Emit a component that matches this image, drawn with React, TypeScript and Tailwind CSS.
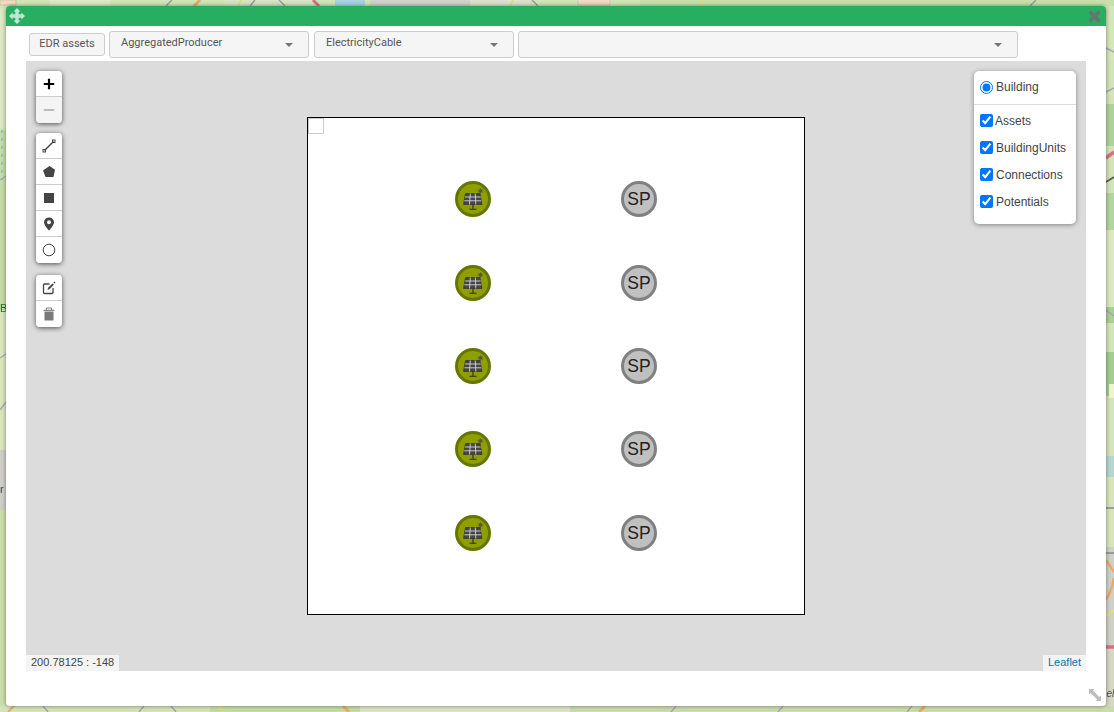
import React from "react";

function MapBackground() {
  const patches = [
    [0, 0, 1114, 712, "#d3e5b8"],
    [0, 8, 6, 120, "#dfe8c4"], [0, 130, 6, 180, "#c5dca6"], [0, 310, 6, 140, "#d9e6bd"], [0, 450, 6, 60, "#cfcfc8"], [0, 510, 6, 200, "#c9dfaa"],
    [1106, 0, 8, 60, "#d5e6b8"], [1106, 104, 8, 42, "#afd29c"], [1106, 193, 8, 37, "#b4d5a2"], [1106, 230, 8, 77, "#dde9c0"], [1106, 307, 8, 16, "#a9cf95"],
    [1106, 352, 8, 44, "#a4cd93"], [1106, 396, 8, 60, "#d4e4bb"], [1106, 456, 8, 21, "#b5d7cf"], [1106, 477, 8, 70, "#d9e4bb"], [1106, 547, 8, 100, "#cfd1c6"], [1106, 647, 8, 65, "#d6d8c4"],
    [50, 0, 60, 6, "#dfe8c4"], [225, 0, 90, 6, "#d9e2c4"], [335, 0, 30, 6, "#a9d3dc"], [370, 0, 100, 6, "#d2d2ca"], [470, 0, 60, 6, "#dfe0cb"], [640, 0, 474, 6, "#c9e0ad"],
    [0, 706, 210, 6, "#d4e2b8"], [210, 706, 150, 6, "#c4dca4"], [360, 706, 210, 6, "#dae4c2"], [570, 706, 544, 6, "#c9dcae"],
  ] as const;
  return (
    <svg className="absolute inset-0 blur-[0.5px]" width="1114" height="712" viewBox="0 0 1114 712">
      {patches.map(([x, y, w, h, c], i) => (
        <rect key={i} x={x} y={y} width={w} height={h} fill={c} />
      ))}
      <rect x="0" y="0" width="16" height="5" fill="#f2dcc0" stroke="#b9a68f" strokeWidth="0.5" />
      <rect x="578" y="-1" width="32" height="6" fill="#f3d9c4" stroke="#c6ad98" strokeWidth="0.5" />
      <g fill="none" strokeWidth="1.4">
        <path d="M166 6 L172 0 M279 0 L285 6 M532 0 L538 6 M250 6 L255 0 M1030 6 L1036 0" stroke="#999" />
        <path d="M238 6 L241 0 M510 6 L513 0 M700 6 L704 0" stroke="#e4d97c" />
        <path d="M313 0 L319 6" stroke="#d9708a" strokeWidth="3" />
        <path d="M194 6 L200 0" stroke="#eba968" strokeWidth="3" />
        <path d="M43 706 L48 712 M139 712 L144 706 M171 706 L176 712 M671 712 L676 706 M778 712 L783 706 M907 712 L912 706" stroke="#a5a5a5" />
        <path d="M343 706 L349 712 M919 712 L925 706" stroke="#eba968" strokeWidth="3" />
        <path d="M8 712 L14 706" stroke="#eba968" strokeWidth="2" />
        <path d="M219 706 L224 712" stroke="#e4d97c" strokeWidth="2" />
        <path d="M1106 158 L1114 152" stroke="#d9708a" strokeWidth="3.5" />
        <path d="M1106 182 L1114 177" stroke="#555" strokeWidth="1.6" />
        <path d="M1106 92 L1114 88 M1106 310 L1114 316 M1106 48 L1114 52" stroke="#a5a5b5" />
        <path d="M1106 508 L1114 508 M1106 553 L1114 553" stroke="#888" />
        <path d="M1106 560 L1114 572 M1106 600 Q1112 590 1114 578" stroke="#eba968" strokeWidth="2.6" />
        <path d="M1106 616 L1114 610" stroke="#e3df76" strokeWidth="2.6" />
        <path d="M1106 647 L1114 647" stroke="#d9708a" strokeWidth="3.5" />
        <path d="M0 358 L6 354 M0 410 L6 402 M0 180 L6 176" stroke="#aaa" />
        <path d="M2 130 L2 180" stroke="#7fb6e0" strokeDasharray="3 5" />
      </g>
      <rect x="1109" y="384" width="5" height="14" fill="#f3f1cf" />
      <text x="0" y="312" fontSize="11" fill="#197a2b" fontFamily="Liberation Sans">B</text>
      <text x="0" y="493" fontSize="11" fill="#444" fontFamily="Liberation Sans">r</text>
      <text x="1106.500" y="697" fontSize="10" fontStyle="italic" fill="#555" fontFamily="Liberation Sans">el</text>
    </svg>
  );
}

function MoveIcon() {
  return (
    <svg width="16" height="16" viewBox="0 0 16 16" fill="#bfe6cf">
      <path d="M8 0 L11.500 3.600 L9.700 3.600 L9.700 6.300 L12.400 6.300 L12.400 4.500 L16 8 L12.400 11.500 L12.400 9.700 L9.700 9.700 L9.700 12.400 L11.500 12.400 L8 16 L4.500 12.400 L6.300 12.400 L6.300 9.700 L3.600 9.700 L3.600 11.500 L0 8 L3.600 4.500 L3.600 6.300 L6.300 6.300 L6.300 3.600 L4.500 3.600 Z" />
    </svg>
  );
}

function SelectBox({ label, w }: { label: string; w: string }) {
  return (
    <div className={`${w} flex h-[27px] items-start justify-between rounded-[3px] border border-[#cccccc] bg-[#f5f5f5] pl-[11px] pr-[15px] pt-[3px] text-[11px] leading-[15px] text-[#555555]`}>
      <span>{label}</span>
      <span className="mt-[8px] h-0 w-0 border-x-[4px] border-t-[4px] border-x-transparent border-t-[#777777]" />
    </div>
  );
}

function ToolButton({ children, last, disabled }: { children: React.ReactNode; last?: boolean; disabled?: boolean }) {
  return (
    <div className={`flex h-[26px] w-[26px] items-center justify-center ${last ? "" : "border-b border-[#cccccc]"} ${disabled ? "bg-[#f4f4f4] text-[#bbbbbb]" : "bg-white text-black"}`}>
      {children}
    </div>
  );
}

function ToolGroup({ children, className = "" }: { children: React.ReactNode; className?: string }) {
  return <div className={`w-[26px] overflow-hidden rounded-[4px] shadow-[0_1px_5px_rgba(0,0,0,0.65)] ${className}`}>{children}</div>;
}

function SolarMarker({ x, y }: { x: number; y: number }) {
  return (
    <div className="absolute h-[36px] w-[36px]" style={{ left: x - 18, top: y - 18 }}>
      <svg width="36" height="36" viewBox="0 0 36 36">
        <circle cx="18" cy="18" r="16.500" fill="#8f9f00" stroke="#647600" strokeWidth="3" />
        <circle cx="25.500" cy="10" r="1.800" fill="#55583a" />
        <path d="M25.500 7V13M22.500 10H28.500M23.400 7.900L27.600 12.100M27.600 7.900L23.400 12.100" stroke="#55583a" strokeWidth="0.6" />
        <path d="M10.500 12.500H25L27 23.500H8.500Z" fill="#454545" stroke="#2a2a2a" strokeWidth="0.6" />
        <path d="M15.300 12.500L14.500 23.500M20.300 12.500L20.800 23.500M10 16H25.700M9.300 19.800H26.300" stroke="#d6d6d6" strokeWidth="0.9" />
        <path d="M18 23.500V28M14.500 28.300H21.500" stroke="#2a2a2a" strokeWidth="1.100" />
      </svg>
    </div>
  );
}

function SpMarker({ x, y }: { x: number; y: number }) {
  return (
    <div
      className="absolute flex h-[36px] w-[36px] items-center justify-center rounded-full border-[3px] border-[#808080] bg-[#c0c0c0] text-[17.500px] text-[#222222]"
      style={{ left: x - 18, top: y - 18 }}
    >
      SP
    </div>
  );
}

function Check({ label, gap }: { label: string; gap?: boolean }) {
  return (
    <label className={`flex h-[27px] items-center pl-[6px] ${gap ? "gap-[2px]" : "gap-[3px]"}`}>
      <input type="checkbox" defaultChecked readOnly className="m-0 -mt-[1px] h-[13px] w-[13px] accent-[#0075ff]" />
      <span>{label}</span>
    </label>
  );
}

const rows = [138, 222, 305, 388, 472];

export default function App() {
  return (
    <div className="relative h-[712px] w-[1114px] overflow-hidden p-[6px] font-['Liberation_Sans',sans-serif]">
      <MapBackground />
      <div className="relative flex h-[700px] w-[1100px] flex-col overflow-hidden rounded-[4px] bg-white shadow-[0_0_4px_rgba(0,0,0,0.45)]">
        <div className="flex h-[20px] shrink-0 items-center justify-between bg-[#27ae60] pl-[3px] pr-[5px]">
          <MoveIcon />
          <svg width="13" height="13" viewBox="0 0 13 13" stroke="#66766c" strokeWidth="3.400" strokeLinecap="butt">
            <path d="M1.500 1.500L11.500 11.500M11.500 1.500L1.500 11.500" />
          </svg>
        </div>
        <div className="flex h-[35px] shrink-0 items-start pl-[23px] pt-[5px] font-['Roboto',sans-serif]">
          <div className="mt-[2px] flex h-[23px] w-[76px] items-center justify-center rounded-[3px] border border-[#cccccc] bg-[#f5f5f5] text-[11px] text-[#555555]">
            EDR assets
          </div>
          <div className="ml-[4px] flex gap-[5px]">
            <SelectBox label="AggregatedProducer" w="w-[200px]" />
            <SelectBox label="ElectricityCable" w="w-[200px]" />
            <SelectBox label="" w="w-[500px] -ml-[1px]" />
          </div>
        </div>
        <div className="relative mx-[20px] h-[610px] bg-[#dcdcdc]">
          <div className="absolute left-[281px] top-[56px] h-[498px] w-[498px] border border-black bg-white">
            <div className="h-[16px] w-[16px] border border-[#cccccc] bg-white" />
          </div>
          {rows.map((y) => (
            <React.Fragment key={y}>
              <SolarMarker x={447} y={y} />
              <SpMarker x={613} y={y} />
            </React.Fragment>
          ))}

          <div className="absolute left-[10px] top-[10px] flex flex-col gap-[10px]">
            <ToolGroup>
              <ToolButton>
                <svg width="12" height="12" viewBox="0 0 12 12"><path d="M6 .8V11.200M.8 6H11.200" stroke="#000" strokeWidth="2.200" /></svg>
              </ToolButton>
              <ToolButton last disabled>
                <svg width="12" height="12" viewBox="0 0 12 12"><path d="M.8 6H11.200" stroke="#bbb" strokeWidth="2" /></svg>
              </ToolButton>
            </ToolGroup>
            <ToolGroup>
              <ToolButton>
                <svg width="14" height="14" viewBox="0 0 14 14" fill="none" stroke="#444">
                  <path d="M2.500 11.500L11.500 2.500" strokeWidth="1.400" />
                  <rect x="1" y="10.500" width="2.500" height="2.500" strokeWidth="1" />
                  <rect x="10.500" y="1" width="2.500" height="2.500" strokeWidth="1" />
                </svg>
              </ToolButton>
              <ToolButton>
                <svg width="14" height="14" viewBox="0 0 14 14"><path d="M7.500 1L13 4.800L11.500 12H3.500L1 5.500Z" fill="#444" /></svg>
              </ToolButton>
              <ToolButton>
                <svg width="12" height="12" viewBox="0 0 12 12"><rect x="1" y="1" width="10" height="10" fill="#444" /></svg>
              </ToolButton>
              <ToolButton>
                <svg width="12" height="14" viewBox="0 0 12 14"><path fillRule="evenodd" d="M6 .5A5 5 0 0 1 11 5.200C11 8.200 6 13.500 6 13.500S1 8.200 1 5.200A5 5 0 0 1 6 .5ZM6 3.200A2 2 0 1 0 6 7.200A2 2 0 1 0 6 3.200Z" fill="#444" /></svg>
              </ToolButton>
              <ToolButton last>
                <svg className="-ml-[1px]" width="14" height="14" viewBox="0 0 14 14"><circle cx="7" cy="7" r="5.800" fill="none" stroke="#444" strokeWidth="1" /></svg>
              </ToolButton>
            </ToolGroup>
            <ToolGroup className="mt-[2px]">
              <ToolButton>
                <svg width="14" height="14" viewBox="0 0 14 14" fill="none" stroke="#444">
                  <path d="M7.500 3H2.500A1 1 0 0 0 1.500 4V11.500A1 1 0 0 0 2.500 12.500H10A1 1 0 0 0 11 11.500V7" strokeWidth="1.300" />
                  <path d="M5.500 8.800L6 6.800L10.500 2.500L11.800 3.800L7.400 8.300Z" fill="#444" stroke="none" />
                  <path d="M12 1L13 2" strokeWidth="1.400" />
                </svg>
              </ToolButton>
              <ToolButton last>
                <svg width="14" height="14" viewBox="0 0 14 14" fill="#555">
                  <path d="M2.500 4.500H11.500V13.500H2.500Z" fill="#7a7a7a" />
                  <path d="M1.500 2.800H12.500V3.700H1.500Z" fill="#666" />
                  <path d="M4.500 2.800V1H9.500V2.800" fill="none" stroke="#666" strokeWidth="0.8" />
                </svg>
              </ToolButton>
            </ToolGroup>
          </div>

          <div className="absolute left-[948px] top-[10px] flex h-[153px] w-[102px] flex-col rounded-[5px] bg-white pt-[3px] text-[12px] text-[#444444] shadow-[0_1px_5px_rgba(0,0,0,0.4)]">
            <label className="flex h-[31px] shrink-0 items-center gap-[3px] border-b border-[#dddddd] pb-[4px] pl-[6px]">
              <input type="radio" defaultChecked readOnly className="m-0 h-[13px] w-[13px] accent-[#0075ff]" />
              <span>Building</span>
            </label>
            <div className="pt-[2px]">
              <Check label="Assets" gap />
              <Check label="BuildingUnits" />
              <Check label="Connections" />
              <Check label="Potentials" />
            </div>
          </div>

          <div className="absolute bottom-0 left-0 flex h-[16px] items-center bg-[#f4f4f4] px-[5px] pb-[1px] text-[11px] text-[#444444]">
            200.78125 : -148
          </div>
          <div className="absolute bottom-0 right-0 flex h-[16px] items-center bg-[#f4f4f4] px-[5px] pb-[1px] text-[11px] text-[#0078a8]">
            Leaflet
          </div>
        </div>
        <div className="absolute bottom-[5px] right-[5px]">
          <svg width="12" height="12" viewBox="0 0 12 12" fill="#bdbdbd" stroke="none">
            <path d="M0 0H5.500L3.900 1.600L10.400 8.100L12 6.500V12H6.500L8.100 10.400L1.600 3.900L0 5.500Z" />
          </svg>
        </div>
      </div>
    </div>
  );
}
